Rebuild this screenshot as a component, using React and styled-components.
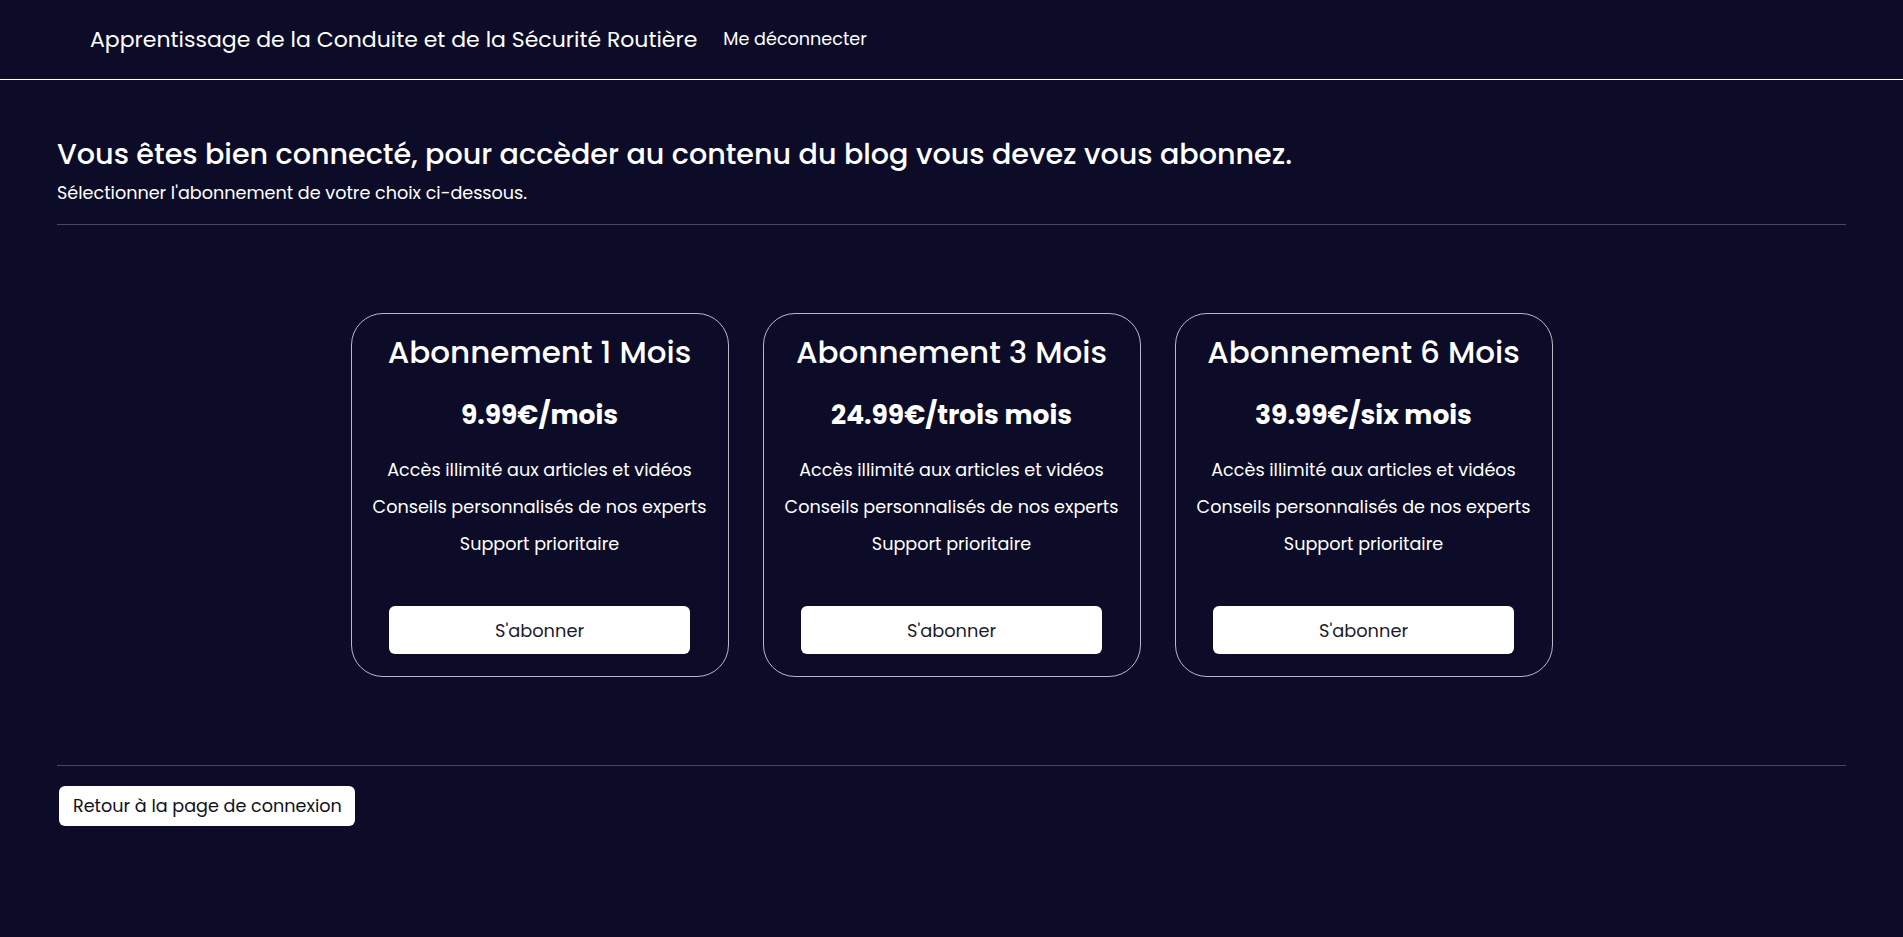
import React from "react"
import styled, { createGlobalStyle } from "styled-components"

const GlobalStyle = createGlobalStyle`
    body {
        margin: 0;
        background: #0c0c29;
        color: #ffffff;
        font-family: "Poppins", "Inter", "Open Sans", sans-serif;
    }
`

const Page = styled.div`
    min-height: 100vh;
    background: #0c0c29;
`

const Header = styled.header`
    display: flex;
    align-items: center;
    height: 79px;
    padding: 0 90px;
    border-bottom: 1px solid #ffffff;
`

const Brand = styled.span`
    font-size: 22px;
    line-height: 26px;
    font-weight: 400;
    margin-right: 26px;
`

const NavLink = styled.a`
    font-size: 17.6px;
    line-height: 21px;
    color: #ffffff;
    text-decoration: none;
    margin-bottom: 1px;
    cursor: pointer;
`

const Main = styled.main`
    padding: 57px 57px 0;
`

const Title = styled.h1`
    margin: 0 0 13px;
    font-size: 28.6px;
    line-height: 34px;
    font-weight: 500;
`

const Subtitle = styled.p`
    margin: 0;
    font-size: 17.6px;
    line-height: 19px;
`

const Divider = styled.hr`
    margin: ${(p) => p.$top || 0}px 0 0;
    border: 0;
    border-top: 1px solid #48485f;
`

const Cards = styled.div`
    display: flex;
    justify-content: center;
    gap: 34px;
    margin: 88px 0;
`

const Card = styled.div`
    width: 376px;
    padding: 20px 0 22px;
    border: 1px solid #b9b9c4;
    border-radius: 32px;
    display: flex;
    flex-direction: column;
    align-items: center;
    text-align: center;
`

const CardTitle = styled.h2`
    margin: 0;
    font-size: 31px;
    line-height: 36px;
    font-weight: 500;
`

const Price = styled.div`
    margin-top: 30px;
    font-size: 26.5px;
    line-height: 29px;
    font-weight: 700;
`

const Features = styled.ul`
    list-style: none;
    margin: 23px 0 0;
    padding: 0;
`

const Feature = styled.li`
    font-size: 17.6px;
    line-height: 37px;
`

const SubscribeButton = styled.button`
    margin-top: 43px;
    width: 301px;
    height: 48px;
    border: 0;
    border-radius: 6px;
    background: #ffffff;
    color: #1b1b2f;
    font-family: inherit;
    font-size: 17.8px;
    cursor: pointer;
`

const BackButton = styled.button`
    margin: 20px 0 0 2px;
    height: 40px;
    padding: 0 13px 0 14px;
    border: 0;
    border-radius: 6px;
    background: #ffffff;
    color: #111122;
    font-family: inherit;
    font-size: 17.6px;
    cursor: pointer;
`

const plans = [
    { months: 1, price: "9.99€/mois" },
    { months: 3, price: "24.99€/trois mois" },
    { months: 6, price: "39.99€/six mois" },
]

const features = [
    "Accès illimité aux articles et vidéos",
    "Conseils personnalisés de nos experts",
    "Support prioritaire",
]

export default function App() {
    return (
        <Page>
            <GlobalStyle />
            <Header>
                <Brand>Apprentissage de la Conduite et de la Sécurité Routière</Brand>
                <NavLink>Me déconnecter</NavLink>
            </Header>

            <Main>
                <Title>Vous êtes bien connecté, pour accèder au contenu du blog vous devez vous abonnez.</Title>
                <Subtitle>Sélectionner l'abonnement de votre choix ci-dessous.</Subtitle>
                <Divider $top={21} />

                <Cards>
                    {plans.map((plan) => (
                        <Card key={plan.months}>
                            <CardTitle>Abonnement {plan.months} Mois</CardTitle>
                            <Price>{plan.price}</Price>
                            <Features>
                                {features.map((f) => (
                                    <Feature key={f}>{f}</Feature>
                                ))}
                            </Features>
                            <SubscribeButton>S'abonner</SubscribeButton>
                        </Card>
                    ))}
                </Cards>

                <Divider />
                <BackButton>Retour à la page de connexion</BackButton>
            </Main>
        </Page>
    )
}
